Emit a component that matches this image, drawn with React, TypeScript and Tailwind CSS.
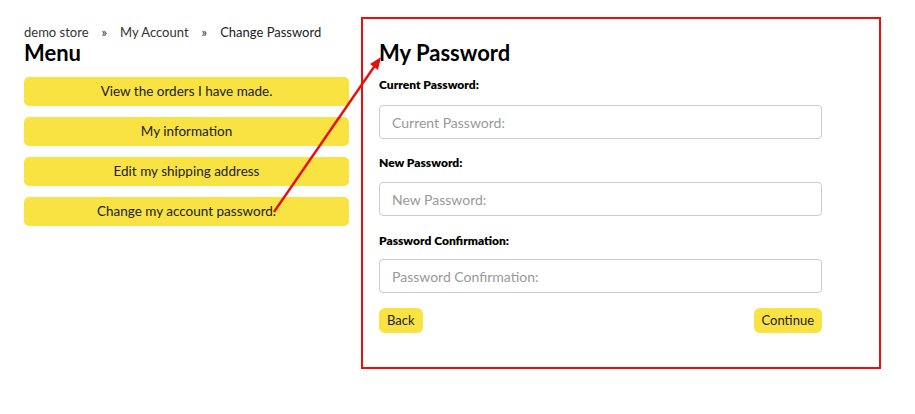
import React from "react";

export default function App() {
  const menu = [
    "View the orders I have made.",
    "My information",
    "Edit my shipping address",
    "Change my account password.",
  ];
  return (
    <div className="relative w-[915px] h-[414px] bg-white overflow-hidden" style={{ fontFamily: "Lato, 'Noto Sans', sans-serif" }}>
      <div className="flex pl-[24px]">
        <div className="w-[325px] pt-[23px] flex flex-col">
          <div className="flex items-center text-[13px] leading-[18px] text-[#333]">
            <span>demo store</span>
            <span className="mx-[13px]">»</span>
            <span>My Account</span>
            <span className="mx-[13px]">»</span>
            <span className="text-[#222]">Change Password</span>
          </div>
          <h2 className="text-[22px] leading-[24px] font-bold text-black">Menu</h2>
          <div className="mt-[12px] flex flex-col gap-[11px]">
            {menu.map((m) => (
              <div key={m} className="h-[29px] rounded-[5px] bg-[#f8e343] flex items-center justify-center text-[13.5px] text-[#222]">
                {m}
              </div>
            ))}
          </div>
        </div>
        <div className="ml-[12px] mt-[17px] w-[520px] h-[352px] border-2 border-[#e8100f] pl-[16px] pt-[20px]">
          <h1 className="text-[22px] leading-[28px] font-bold text-black">My Password</h1>
          <div className="w-[443px] flex flex-col">
            <label className="mt-[10px] text-[12px] leading-[16px] font-extrabold text-black">Current Password:</label>
            <input className="mt-[12px] h-[34px] rounded-[4px] border border-[#ccc] px-[12px] text-[14px] placeholder:text-[#999] outline-none" placeholder="Current Password:" />
            <label className="mt-[16px] text-[12px] leading-[16px] font-extrabold text-black">New Password:</label>
            <input className="mt-[11px] h-[34px] rounded-[4px] border border-[#ccc] px-[12px] text-[14px] placeholder:text-[#999] outline-none" placeholder="New Password:" />
            <label className="mt-[17px] text-[12px] leading-[16px] font-extrabold text-black">Password Confirmation:</label>
            <input className="mt-[10px] h-[34px] rounded-[4px] border border-[#ccc] px-[12px] text-[14px] placeholder:text-[#999] outline-none" placeholder="Password Confirmation:" />
            <div className="mt-[15px] flex justify-between">
              <button className="h-[25px] px-[8px] rounded-[6px] bg-[#f8e343] text-[13px] text-[#222]">Back</button>
              <button className="h-[25px] px-[8px] rounded-[6px] bg-[#f8e343] text-[13px] text-[#222]">Continue</button>
            </div>
          </div>
        </div>
      </div>
      <svg className="absolute left-0 top-0 pointer-events-none" width="915" height="414">
        <line x1="274" y1="212" x2="376" y2="64" stroke="#e8100f" strokeWidth="2.4" />
        <polygon points="381,57 370,64 378,70" fill="#e8100f" />
      </svg>
    </div>
  );
}
